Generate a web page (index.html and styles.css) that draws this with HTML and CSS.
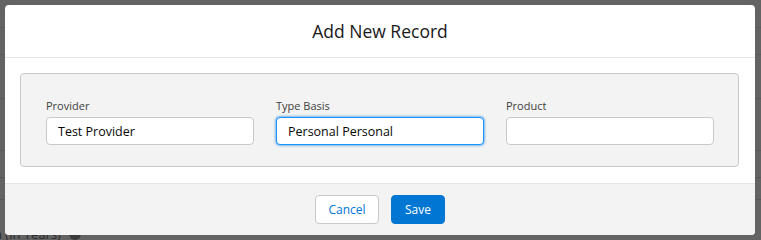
FILE: index.html
```html
<!DOCTYPE html>
<html lang="en">
<head>
    <meta charset="UTF-8">
    <title>Add New Record</title>
    <link rel="stylesheet" href="styles.css">
</head>
<body>
    <!-- page behind the overlay -->
    <div class="page">
        <div class="page-row r1"></div>
        <div class="page-row r2"></div>
        <div class="page-row r3"></div>
        <div class="page-row r4"></div>
        <div class="page-row r5"></div>
        <div class="page-row r6"></div>
        <div class="page-foot">n (in Years) <span class="help-dot"></span></div>
    </div>

    <div class="modal">
        <div class="modal-header">
            <h2>Add New Record</h2>
        </div>
        <div class="modal-body">
            <div class="panel">
                <div class="field">
                    <label>Provider</label>
                    <input type="text" value="Test Provider">
                </div>
                <div class="field">
                    <label>Type Basis</label>
                    <input type="text" class="focused" value="Personal Personal">
                </div>
                <div class="field">
                    <label>Product</label>
                    <input type="text" value="">
                </div>
            </div>
        </div>
        <div class="modal-footer">
            <button class="btn btn-neutral">Cancel</button>
            <button class="btn btn-brand">Save</button>
        </div>
    </div>
</body>
</html>
```

FILE: styles.css
```css
:root {
    --brand: #0176d3;
    --border: #c9c9c9;
    --panel-bg: #f3f3f3;
    --text: #181818;
    --label: #3e3e3c;
}
body, html {
    margin: 0;
    padding: 0;
    height: 100%;
    overflow: hidden;
    font-family: "Open Sans", "Noto Sans", sans-serif;
    background-color: #636363;
    color: var(--text);
}
.page {
    display: flex;
    flex-direction: column;
}
.page-row {
    border-bottom: 1px solid #575757;
}
.r1 { height: 27px; }
.r2 { height: 26px; }
.r3 { height: 43px; }
.r4 { height: 51px; }
.r5 { height: 26px; }
.r6 { height: 21px; }
.page-foot {
    display: flex;
    align-items: center;
    gap: 8px;
    margin-top: 25px;
    margin-left: -6px;
    font-size: 13px;
    color: #2b2b2b;
}
.help-dot {
    width: 12px;
    height: 12px;
    border-radius: 50%;
    background-color: #3a3a3a;
}
.modal {
    position: absolute;
    top: 5px;
    left: 5px;
    width: 750px;
    height: 230px;
    background-color: #fff;
    border-radius: 4px;
    overflow: hidden;
    display: flex;
    flex-direction: column;
}
.modal-header {
    height: 52px;
    border-bottom: 1px solid #e5e5e5;
    display: flex;
    align-items: center;
    justify-content: center;
}
.modal-header h2 {
    margin: 0;
    font-size: 17.5px;
    font-weight: 400;
    color: #181818;
}
.modal-body {
    padding: 15px 16px 16px 15px;
}
.panel {
    display: grid;
    grid-template-columns: repeat(3, 208px);
    gap: 22px;
    padding: 24px 24px 21px 25px;
    background-color: var(--panel-bg);
    border: 1px solid var(--border);
    border-radius: 4px;
    height: 47px;
}
.field {
    display: flex;
    flex-direction: column;
}
.field label {
    font-size: 11px;
    line-height: 16px;
    color: var(--label);
    margin-bottom: 3px;
}
.field input {
    box-sizing: border-box;
    height: 28px;
    padding: 0 11px;
    font-family: inherit;
    font-size: 12.5px;
    color: #080707;
    background-color: #fff;
    border: 1px solid var(--border);
    border-radius: 4px;
    outline: none;
}
.field input.focused {
    border-color: #1b96ff;
    box-shadow: 0 0 3px #0176d3;
}
.modal-footer {
    flex-grow: 1;
    background-color: var(--panel-bg);
    border-top: 1px solid #e5e5e5;
    display: flex;
    justify-content: center;
    align-items: center;
    gap: 12px;
}
.btn {
    box-sizing: border-box;
    height: 29px;
    padding: 0;
    font-family: inherit;
    font-size: 12px;
    border-radius: 4px;
    cursor: pointer;
}
.btn-neutral {
    width: 64px;
    background-color: #fff;
    border: 1px solid var(--border);
    color: var(--brand);
}
.btn-brand {
    width: 54px;
    background-color: var(--brand);
    border: 1px solid var(--brand);
    color: #fff;
}
```
